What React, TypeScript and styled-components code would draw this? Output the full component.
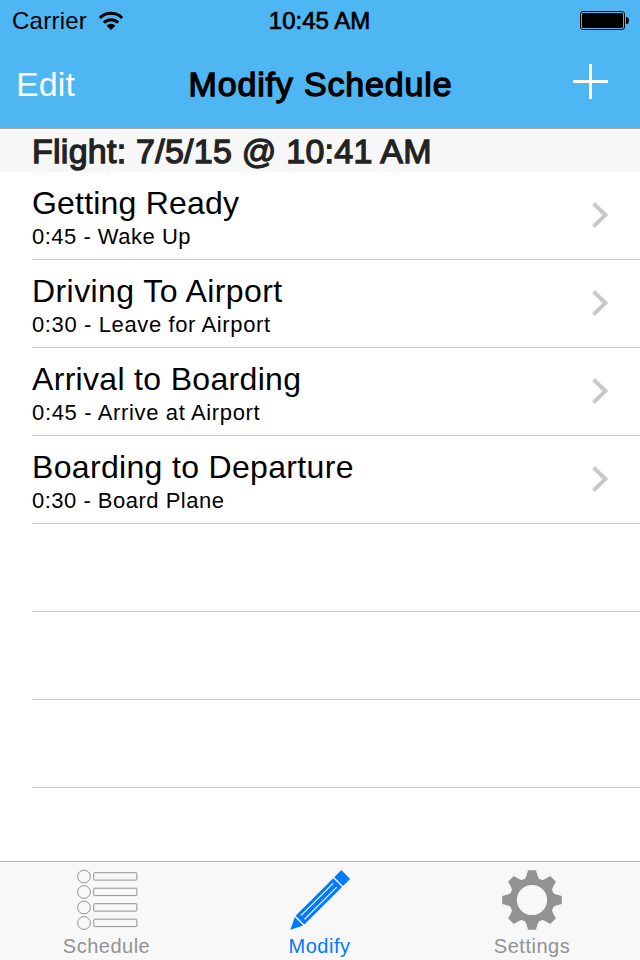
import React from "react";
import styled, { createGlobalStyle } from "styled-components";

const GlobalStyle = createGlobalStyle`
  * { box-sizing: border-box; }
  body {
    margin: 0;
    background: #fff;
    font-family: "Liberation Sans", Arial, sans-serif;
    color: #000;
  }
`;

const Screen = styled.div`
  width: 640px;
  height: 960px;
  display: flex;
  flex-direction: column;
  overflow: hidden;
  background: #fff;
`;

const Header = styled.header`
  height: 129px;
  flex: none;
  background: #4eb6f2;
  border-bottom: 1px solid #a5a9ac;
`;

const StatusBar = styled.div`
  height: 40px;
  display: grid;
  grid-template-columns: 1fr auto 1fr;
  align-items: center;
  padding: 2px 11px 0 12px;
`;

const Carrier = styled.div`
  display: flex;
  align-items: center;
  gap: 10.5px;
  font-size: 24px;
  line-height: 28px;
  letter-spacing: 0.25px;
`;

const Clock = styled.div`
  margin-right: 2px;
  font-size: 24px;
  line-height: 28px;
  letter-spacing: 0;
  -webkit-text-stroke: 0.7px #000;
`;

const BatteryIcon = styled.svg`
  justify-self: end;
  margin-top: -1px;
`;

const NavBar = styled.nav`
  height: 88px;
  display: grid;
  grid-template-columns: 1fr auto 1fr;
  align-items: center;
  padding: 0 32px 0 16px;
`;

const EditButton = styled.button`
  border: 0;
  padding: 0;
  background: none;
  justify-self: start;
  font-family: inherit;
  font-size: 34px;
  line-height: 40px;
  letter-spacing: 0.1px;
  color: #fff;
`;

const Title = styled.h1`
  margin: 0 0 0 17px;
  font-size: 34px;
  line-height: 40px;
  font-weight: normal;
  letter-spacing: 0.83px;
  -webkit-text-stroke: 1.3px #000;
`;

const AddButton = styled.button`
  border: 0;
  padding: 0;
  background: none;
  justify-self: end;
  display: flex;
  margin-top: -5px;
`;

const SectionHeader = styled.h2`
  height: 43px;
  flex: none;
  margin: 0;
  padding: 2px 32px 0;
  background: #f7f7f7;
  color: #232323;
  font-size: 34px;
  line-height: 40px;
  font-weight: normal;
  letter-spacing: 0.25px;
  -webkit-text-stroke: 1.3px #232323;
`;

const List = styled.ul`
  flex: 1;
  min-height: 0;
  margin: 0;
  padding: 0 0 0 32px;
  list-style: none;
  overflow: hidden;
`;

const Row = styled.li`
  height: 88px;
  border-bottom: 1px solid #c8c7cc;
  display: flex;
  justify-content: space-between;
  padding: 13px 32px 0 0;
`;

const RowTitle = styled.div<{ $spacing: number }>`
  font-size: 32px;
  line-height: 37px;
  letter-spacing: ${(p) => p.$spacing}px;
`;

const RowDetail = styled.div<{ $spacing: number }>`
  margin-top: 2px;
  font-size: 22px;
  line-height: 26px;
  letter-spacing: ${(p) => p.$spacing}px;
`;

const Chevron = styled.svg`
  margin-top: 17px;
`;

const TabBar = styled.footer`
  height: 99px;
  flex: none;
  display: grid;
  grid-template-columns: 213px 213px 212px;
  border-top: 1px solid #b2b2b2;
  background: #f8f8f8;
`;

const Tab = styled.div<{ $active?: boolean }>`
  display: flex;
  flex-direction: column;
  align-items: center;
  padding-top: 7px;
  color: ${(p) => (p.$active ? "#007aff" : "#929292")};
`;

const TabLabel = styled.span`
  margin-top: 3px;
  font-size: 20px;
  line-height: 24px;
  letter-spacing: 0.5px;
`;

const WifiIcon = () => (
  <svg width="26" height="20" viewBox="0 0 26 20" fill="none" stroke="#000" strokeWidth="3">
    <path d="M1.9 7a15.6 15.6 0 0 1 22.2 0" />
    <path d="M5.8 11.6a10.3 10.3 0 0 1 14.4 0" />
    <path d="M13 19L8.6 14.7a5.9 5.9 0 0 1 8.8 0z" fill="#000" stroke="none" />
  </svg>
);

const ScheduleIcon = () => (
  <svg width="62" height="62" viewBox="0 0 62 62" fill="none" stroke="currentColor" strokeWidth="1">
    {[7.5, 23, 38.5, 54].map((y) => (
      <g key={y}>
        <circle cx="8" cy={y} r="6.4" />
        <rect x="17.8" y={y - 3.8} width="43" height="7.4" rx="0.5" />
      </g>
    ))}
  </svg>
);

const PencilIcon = () => (
  <svg width="62" height="62" viewBox="0 0 62 62">
    <g transform="translate(1.4 60.8) rotate(-45)">
      <path d="M0 0L12.2 -6V6Z" fill="currentColor" />
      <rect x="13.6" y="-6.2" width="53.2" height="12.4" fill="currentColor" />
      <rect x="68.2" y="-6.2" width="10" height="12.4" fill="currentColor" />
      <path d="M17.5 -2.6H63M17.5 2.6H63" stroke="#f8f8f8" strokeWidth="1.2" />
    </g>
  </svg>
);

const GearIcon = () => (
  <svg width="62" height="62" viewBox="-31 -31 62 62">
    <g fill="currentColor">
      {[0, 45, 90, 135, 180, 225, 270, 315].map((angle) => (
        <path key={angle} d="M-8.5 -20Q-6 -22 -5.6 -24L-4 -29.8H4L5.6 -24Q6 -22 8.5 -20Z" transform={`rotate(${angle})`} />
      ))}
    </g>
    <circle r="18.7" fill="none" stroke="currentColor" strokeWidth="7.2" />
  </svg>
);

const rows = [
  { title: "Getting Ready", detail: "0:45 - Wake Up", ts: 0.2, ds: 0.5 },
  { title: "Driving To Airport", detail: "0:30 - Leave for Airport", ts: 0.42, ds: 0.62 },
  { title: "Arrival to Boarding", detail: "0:45 - Arrive at Airport", ts: 0.32, ds: 0.65 },
  { title: "Boarding to Departure", detail: "0:30 - Board Plane", ts: 0.33, ds: 0.5 },
];

export default function App() {
  return (
    <>
      <GlobalStyle />
      <Screen>
        <Header>
          <StatusBar>
            <Carrier>
              Carrier
              <WifiIcon />
            </Carrier>
            <Clock>10:45 AM</Clock>
            <BatteryIcon width="49" height="19" viewBox="0 0 49 19">
              <rect x="0.5" y="0.5" width="44" height="18" rx="2.5" fill="none" stroke="#000" />
              <rect x="2" y="2" width="41" height="15" rx="1.5" />
              <path d="M46 6h1.2q1.8 1.2 1.8 3.5t-1.8 3.5h-1.2z" />
            </BatteryIcon>
          </StatusBar>
          <NavBar>
            <EditButton>Edit</EditButton>
            <Title>Modify Schedule</Title>
            <AddButton aria-label="Add">
              <svg width="35" height="35" viewBox="0 0 35 35">
                <path d="M17.5 0V35M0 17.5H35" stroke="#fff" strokeWidth="3" />
              </svg>
            </AddButton>
          </NavBar>
        </Header>
        <SectionHeader>Flight: 7/5/15 @ 10:41 AM</SectionHeader>
        <List>
          {rows.map((row) => (
            <Row key={row.title}>
              <div>
                <RowTitle $spacing={row.ts}>{row.title}</RowTitle>
                <RowDetail $spacing={row.ds}>{row.detail}</RowDetail>
              </div>
              <Chevron width="16" height="26" viewBox="0 0 16 26">
                <path d="M1.5 1.5L13.5 13L1.5 24.5" fill="none" stroke="#c7c7cc" strokeWidth="4" />
              </Chevron>
            </Row>
          ))}
          <Row />
          <Row />
          <Row />
        </List>
        <TabBar>
          <Tab>
            <ScheduleIcon />
            <TabLabel>Schedule</TabLabel>
          </Tab>
          <Tab $active>
            <PencilIcon />
            <TabLabel>Modify</TabLabel>
          </Tab>
          <Tab>
            <GearIcon />
            <TabLabel>Settings</TabLabel>
          </Tab>
        </TabBar>
      </Screen>
    </>
  );
}
